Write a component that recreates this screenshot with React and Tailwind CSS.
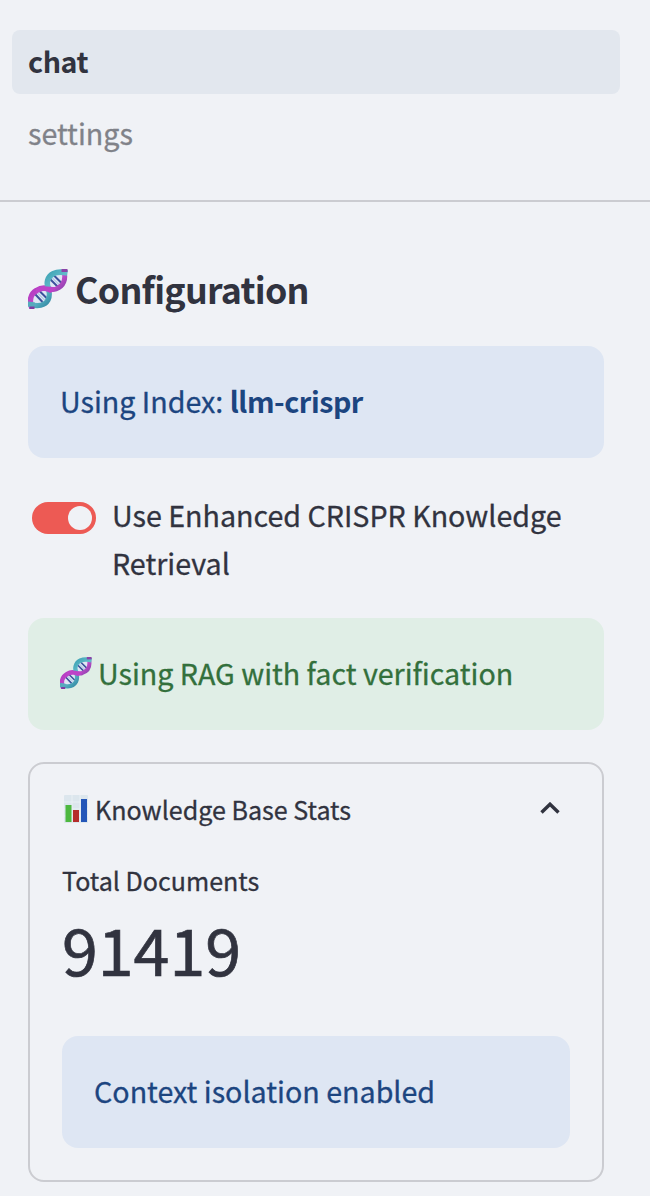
import { useId } from "react";

function Dna({ className }) {
  const id = useId();
  const teal = `${id}-teal`;
  const violet = `${id}-violet`;
  return (
    <svg viewBox="0 0 40 40" className={className} aria-hidden="true">
      <defs>
        <linearGradient id={teal} x1="0" y1="0" x2="1" y2="1">
          <stop offset="0" stopColor="#3fa3b4" />
          <stop offset="0.5" stopColor="#62bccb" />
          <stop offset="1" stopColor="#3288a3" />
        </linearGradient>
        <linearGradient id={violet} x1="0" y1="0" x2="1" y2="1">
          <stop offset="0" stopColor="#b238c0" />
          <stop offset="0.55" stopColor="#c34dcb" />
          <stop offset="1" stopColor="#8a41ad" />
        </linearGradient>
      </defs>
      <path d="M20 9Q29 4 35 6Q36 14 30 18Q24 20 20 17Z" fill="#dfe7f4" />
      <path d="M5 24Q12 19 20 22Q20 31 15 34Q8 35 5 33Z" fill="#dfe7f4" />
      <path d="M22 10 30 18M26 6.500 34 14.500M7 25 14.500 33M11 21.500 18.500 29" stroke="#3c519c" strokeWidth="2" />
      <path d="M24 8.500 32 16.500M9 23.500 16.500 31" stroke="#96b9e0" strokeWidth="1" />
      <path d="M36 2C38 10 36 17 28 20C25 21 22 20.500 19 19" fill="none" stroke={`url(#${violet})`} strokeWidth="5" />
      <path d="M4 39C1 32 2.500 25 8.500 21.500C13 18.500 17 18.500 21 20" fill="none" stroke={`url(#${violet})`} strokeWidth="5.600" />
      <path d="M1 35.200C10 38 17 36.500 20 31C22 27 21.500 22 19.500 17" fill="none" stroke={`url(#${teal})`} strokeWidth="5.200" />
      <path d="M21 21C17.500 14 19.500 7.500 25.500 4.500C30 2.500 35 3 39.500 4" fill="none" stroke={`url(#${teal})`} strokeWidth="5.600" />
      <path d="M8 20C13 16 20 17 28 19Q26 23 22 24C17 21 12 21.500 8 24.500Z" fill="#bd43c8" />
      <path d="M33.500 0H39.500V3H33.500Z" fill="#8b43a8" />
      <path d="M1.500 37H6.500V40H1.500Z" fill="#7d3ca2" />
      <path d="M0 32.500 7 33.500V37.500H0Z" fill="#57aabd" />
    </svg>
  );
}

function BarChart({ className }) {
  return (
    <svg viewBox="0 0 24 28" className={className} aria-hidden="true">
      <rect width="24" height="28" rx="1" fill="#dce6ed" />
      <path d="M0 7H24M0 14H24M0 21H24M8 0V28M16 0V28" stroke="#e9f0f4" />
      <rect x="1.500" y="10" width="6" height="17" fill="#4db83f" />
      <rect x="9" y="15" width="6" height="12" fill="#b52c2b" />
      <rect x="17" y="4" width="6" height="23" fill="#2456b8" />
    </svg>
  );
}

function Alert({ className, children }) {
  return (
    <div className={`flex h-28 items-center rounded-2xl px-8 pb-[3px] ${className}`}>
      {children}
    </div>
  );
}

export default function App() {
  return (
    <aside className="h-[1196px] w-full overflow-hidden bg-[#f0f2f6] pt-[30px] font-['Noto_Sans_CJK_SC','Source_Sans_Pro',sans-serif] text-[28.65px] leading-[48px] text-[#31333f] [-webkit-text-stroke-width:0.3px]">
      <nav className="flex flex-col gap-2 pl-3 pr-[30px]">
        <a className="flex h-16 items-center rounded-lg bg-[#e2e7ee] px-4 pb-[3px] font-bold tracking-[-0.4px] [-webkit-text-stroke-width:0px]">chat</a>
        <a className="flex h-16 items-center px-4 pb-[3px] text-[#808289]">settings</a>
      </nav>
      <hr className="mt-[34px] border-0 border-t-2 border-[#cbccd1]" />

      <main className="pl-7 pr-[46px]">
        <h2 className="mt-[63px] flex h-12 items-center gap-[7px] pb-[3px] text-[35.8px] font-bold tracking-[-0.75px] [-webkit-text-stroke-width:0px]">
          <Dna className="mt-0.5 size-10" />
          <span>Configuration</span>
        </h2>

        <Alert className="mt-[33px] bg-[#dee6f3] text-[#1c4580]">
          <p>Using Index: <strong className="font-bold tracking-[-0.45px] [-webkit-text-stroke-width:0px]">llm-crispr</strong></p>
        </Alert>

        <label className="mt-[33px] flex h-[95px] gap-4 pl-1">
          <span className="mt-[11px] flex h-8 w-16 shrink-0 items-center justify-end rounded-full bg-[#ed5a54] pr-1">
            <span className="size-6 rounded-full bg-[#f0f2f6]" />
          </span>
          <span>Use Enhanced CRISPR Knowledge Retrieval</span>
        </label>

        <Alert className="mt-8 gap-1.5 bg-[#e0eee6] text-[#33703c]">
          <Dna className="size-8" />
          <p>Using RAG with fact verification</p>
        </Alert>

        <section className="mt-8 h-[420px] rounded-2xl border-2 border-[#cbccd1] px-8 pt-[21px]">
          <header className="flex h-12 items-center justify-between text-[25.07px]">
            <div className="flex items-center gap-[7px] pl-0.5">
              <BarChart className="h-7 w-6" />
              <span>Knowledge Base Stats</span>
            </div>
            <svg viewBox="0 0 20 12" className="mb-0.5 mr-2.5 h-3 w-5" fill="none" aria-hidden="true">
              <path d="M1.500 10.500 10 2.200 18.500 10.500" stroke="#31333f" strokeWidth="3.400" />
            </svg>
          </header>
          <p className="mt-[27px] text-[25.07px] leading-[40px]">Total Documents</p>
          <p className="text-[64.5px] leading-[96px] [-webkit-text-stroke-width:0.7px]">91419</p>
          <Alert className="mt-10 bg-[#dee6f3] text-[#1c4580]">
            <p>Context isolation enabled</p>
          </Alert>
        </section>
      </main>
    </aside>
  );
}
